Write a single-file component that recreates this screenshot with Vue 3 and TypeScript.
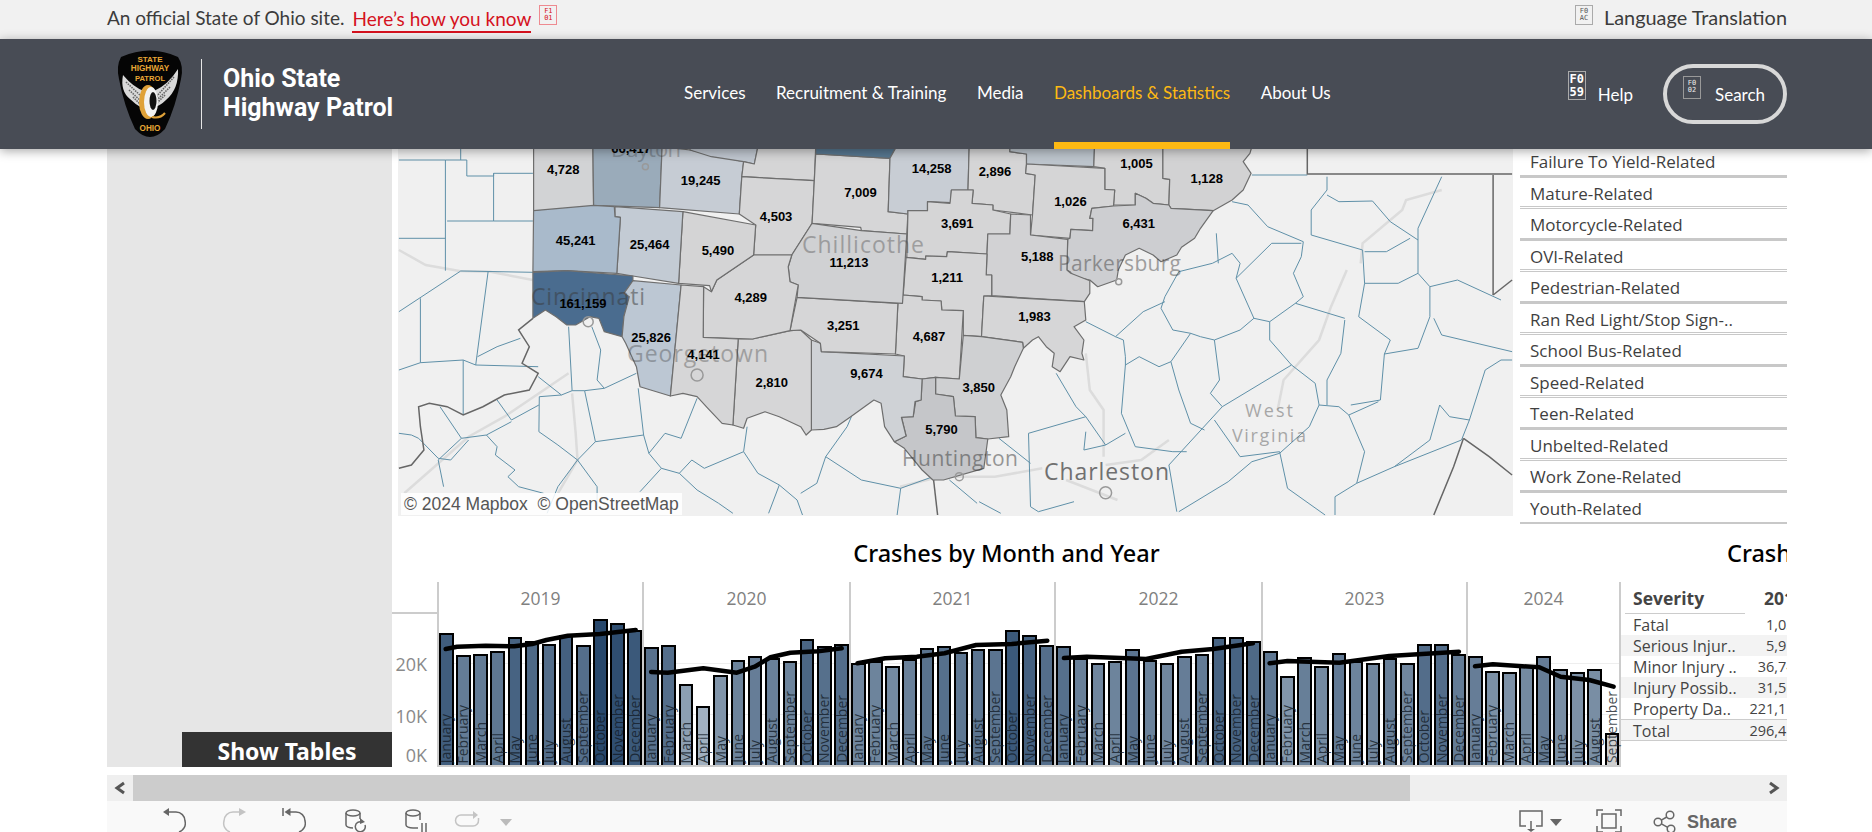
<template>
  <div class="page">
    <div class="notice">
      <span class="notice-text">An official State of Ohio site.</span>
      <a class="notice-link">Here’s how you know</a>
      <span class="tofu tofu-red"><i>F1</i><i>01</i></span>
      <span class="notice-lang">
        <span class="tofu tofu-grey"><i>F0</i><i>AC</i></span>
        Language Translation
      </span>
    </div>

    <header class="site-header">
      <div class="brand">
        <svg class="shield" viewBox="0 0 64 87" width="64" height="87">
          <path d="M3 6Q32-7 60 6Q66 15 63 28Q58 55 47 78Q32 94 17 78Q6 55 1 28Q-2 15 3 6Z" fill="#050505" />
          <path d="M5 24Q2 40 12 48Q18 54 24 57L26 40Q15 36 5 24Z" fill="#d9d9d9" />
          <path d="M60 18Q61 38 48 49Q42 55 36 56L36 40Q50 34 60 18Z" fill="#d9d9d9" />
          <path d="M8 31L24 46M11 39L24 51M15 46L23 54M56 26L38 46M52 36L38 50M47 44L38 53" stroke="#666" stroke-width="1.6" stroke-dasharray="1.5 1" fill="none" />
          <ellipse cx="30" cy="51" rx="9" ry="17" fill="#dfa138" />
          <ellipse cx="33" cy="51" rx="7" ry="15" fill="#f2f2f2" />
          <ellipse cx="35" cy="50" rx="3.5" ry="9" fill="#111" />
          <path d="M34 66Q42 68 47 62" stroke="#dfa138" stroke-width="2" fill="none" />
          <g class="shield-text" text-anchor="middle">
            <text x="32" y="11" font-size="8">STATE</text>
            <text x="32" y="20" font-size="8.2">HIGHWAY</text>
            <text x="32" y="30" font-size="7.6">PATROL</text>
            <text x="32" y="80" font-size="8.2">OHIO</text>
          </g>
        </svg>
        <span class="brand-rule"></span>
        <div class="brand-name">Ohio State<br />Highway Patrol</div>
      </div>

      <nav class="main-nav">
        <a v-for="item in navItems" :key="item" class="nav-item" :class="{ active: item === activeNav }">{{ item }}</a>
      </nav>

      <div class="header-tools">
        <span class="tofu tofu-help"><i>F0</i><i>59</i></span>
        <span class="tool-label">Help</span>
        <div class="search-pill">
          <span class="tofu tofu-search"><i>F0</i><i>02</i></span>
          <span class="tool-label">Search</span>
        </div>
      </div>
    </header>

    <main class="viz">
      <aside class="side-panel">
        <div class="show-tables">Show Tables</div>
      </aside>

      <div class="dash">
        <div class="upper">
          <div class="map-pane">
            <svg class="map" viewBox="398 149 1115 367" width="1115" height="367">
              <polyline v-for="(line, i) in roads" :key="'r' + i" class="road" :points="line" />
              <polyline v-for="(line, i) in countyLines" :key="'l' + i" class="county-line" :points="line" />
              <polyline v-for="(line, i) in darkLines" :key="'d' + i" class="state-line" :points="line" />
              <polygon v-for="(c, i) in counties" :key="'c' + i" class="county" :points="c.points" :fill="c.fill" />
              <circle v-for="(c, i) in cityDots" :key="'o' + i" class="city-dot" :cx="c.x" :cy="c.y" :r="c.r" />
              <text
                v-for="city in cities"
                :key="city.name"
                class="city"
                :x="city.x"
                :y="city.y"
                :font-size="city.size"
                :textLength="city.w"
                :opacity="city.alpha"
              >{{ city.name }}</text>
              <text v-for="l in countyLabels" :key="l.text" class="count" :x="l.x" :y="l.y">{{ l.text }}</text>
            </svg>
            <div class="attrib">© 2024 Mapbox&nbsp; © OpenStreetMap</div>
          </div>

          <ul class="filter-list">
            <li v-for="(name, i) in filters" :key="name" class="filter-row" :class="{ thick: i % 2 === 0 }">{{ name }}</li>
          </ul>
        </div>

        <div class="lower">
          <section class="chart-col">
            <h3 class="sheet-title">Crashes by Month and Year</h3>
            <div class="chart">
              <div class="axis">
                <div class="axis-head"></div>
                <div class="tick tick-20">20K</div>
                <div class="tick tick-10">10K</div>
                <div class="tick tick-0">0K</div>
              </div>
              <div class="years">
                <div v-for="y in years" :key="y.year" class="year" :style="{ width: y.width + 'px' }">
                  <div class="year-head">{{ y.year }}</div>
                  <div class="plot">
                    <div
                      v-for="(h, m) in y.heights"
                      :key="m"
                      class="bar"
                      :style="{ height: h + 'px', background: barColor(h, y.year, m) }"
                    >
                      <span class="month">{{ months[m] }}</span>
                    </div>
                  </div>
                </div>
                <svg class="trend" viewBox="437 582 1184 185" width="1184" height="185">
                  <polyline v-for="(t, i) in trends" :key="i" :points="t" />
                </svg>
              </div>
            </div>
          </section>

          <section class="table-col">
            <h3 class="sheet-title table-title">Crashes by Severity</h3>
            <div class="severity">
              <div class="sev-head">
                <span class="sev-name">Severity</span>
                <span class="sev-year">2019</span>
              </div>
              <div
                v-for="(row, i) in severity"
                :key="row.name"
                class="sev-row"
                :class="{ shade: i % 2 === 1, total: row.name === 'Total' }"
              >
                <span class="sev-label">{{ row.name }}</span>
                <span class="sev-value">{{ row.value }}</span>
              </div>
            </div>
          </section>
        </div>
      </div>
    </main>

    <div class="hscroll">
      <span class="scroll-btn">
        <svg viewBox="0 0 26 26" width="26" height="26"><path d="M17 8l-7 5 7 5" /></svg>
      </span>
      <span class="scroll-thumb"></span>
      <span class="scroll-rest"></span>
      <span class="scroll-btn">
        <svg viewBox="0 0 26 26" width="26" height="26"><path d="M9 8l7 5-7 5" /></svg>
      </span>
    </div>

    <div class="toolbar">
      <div class="tool-group">
        <svg class="ico" width="24" height="31" viewBox="0 0 24 31">
          <path d="M3 11H14a9 9 0 0 1 9 9a9 9 0 0 1-6 11" /><path class="solid" d="M1 11l6-4v8z" />
        </svg>
        <svg class="ico off ml-36" width="24" height="31" viewBox="0 0 24 31">
          <path d="M21 11H11a9 9 0 0 0-9 9a9 9 0 0 0 6 11" /><path class="solid" d="M24 11l-7-4v8z" />
        </svg>
        <svg class="ico ml-36" width="24" height="31" viewBox="0 0 24 31">
          <path d="M1 7v8M5 11H14a9 9 0 0 1 9 9a9 9 0 0 1-6 11" /><path class="solid" d="M2.5 11l6-4v8z" />
        </svg>
        <svg class="ico ml-39" width="24" height="31" viewBox="0 0 24 31">
          <ellipse cx="8" cy="12" rx="7" ry="3" />
          <path d="M1 12V24a7 3 0 0 0 7 3M15 12v6M20 24a5 5 0 1 1-3-3" /><path class="solid" d="M15 17l5 4-5 2z" />
        </svg>
        <svg class="ico ml-36" width="24" height="31" viewBox="0 0 24 31">
          <ellipse cx="8" cy="12" rx="7" ry="3" />
          <path d="M1 12V24a7 3 0 0 0 7 3h5M15 12v7M17 22v9M21 22v9" />
        </svg>
        <svg class="ico off ml-25" width="26" height="31" viewBox="0 0 26 31">
          <path d="M20 14H7a5.500 5.500 0 0 0 0 11H19a5.500 5.500 0 0 0 5.500-6V17" /><path class="solid" d="M24 14l-5-4v8z" />
        </svg>
        <svg class="caret off-fill ml-20" width="12" height="31" viewBox="0 0 12 31"><path d="M0 18H12L6 25z" /></svg>
      </div>

      <div class="tool-group">
        <svg class="ico" width="24" height="31" viewBox="0 0 24 31">
          <path d="M7 25H1V10H23V25H17M12 20V29" /><path class="solid" d="M8 28H16L12 31z" />
        </svg>
        <svg class="caret ml-7" width="12" height="31" viewBox="0 0 12 31"><path d="M0 18H12L6 25z" /></svg>
        <svg class="ico ml-34" width="26" height="31" viewBox="0 0 26 31">
          <rect x="6" y="13" width="14" height="14" />
          <path d="M1 15V9H7M19 9H25V15M1 25V31H7M19 31H25V25" />
        </svg>
        <svg class="ico ml-31" width="24" height="31" viewBox="0 0 24 31">
          <circle cx="17" cy="14" r="3.800" /><circle cx="5" cy="21" r="3.800" /><circle cx="18" cy="28" r="3.800" />
          <path d="M13.800 16L8.300 19.200M8.400 22.800L14.700 26.300" />
        </svg>
        <span class="share">Share</span>
      </div>
    </div>
  </div>
</template>

<script setup lang="ts">
interface Sheet { x0: number; sx: number; y0: number }
interface YearBars { year: number; width: number; heights: number[] }

// the map and trend lines were traced on zoomed crops, one sheet per crop
const sheets: Record<string, Sheet> = {
  a: { x0: 390, sx: 2.8, y0: 140 },
  b: { x0: 900, sx: 2.529, y0: 140 },
  c: { x0: 100, sx: 2.8, y0: 530 },
  d: { x0: 640, sx: 2.529, y0: 530 },
  e: { x0: 1250, sx: 2.8, y0: 530 }
}

const toPage = (p: string) => {
  const sheet = sheets[p[0]]
  const [x, y] = p.slice(1).split(',').map(Number)
  return { x: +(sheet.x0 + x / sheet.sx).toFixed(1), y: +(sheet.y0 + y / 3).toFixed(1) }
}

const toPoints = (s: string) =>
  s.trim().split(/\s+/).map(p => {
    const { x, y } = toPage(p)
    return `${x},${y}`
  }).join(' ')

const navItems = ['Services', 'Recruitment & Training', 'Media', 'Dashboards & Statistics', 'About Us']
const activeNav = 'Dashboards & Statistics'

const filters = [
  'Failure To Yield-Related', 'Mature-Related', 'Motorcycle-Related', 'OVI-Related',
  'Pedestrian-Related', 'Ran Red Light/Stop Sign-..', 'School Bus-Related', 'Speed-Related',
  'Teen-Related', 'Unbelted-Related', 'Work Zone-Related', 'Youth-Related'
]

const counties = [
  ['#d2d3d5', 'a402,20 a568,20 a570,212 a402,212'],
  ['#9aabba', 'a568,20 a762,20 a755,203 a570,196'],
  ['#c6ccd4', 'a762,20 a840,30 a990,65 a985,110 a978,222 a755,203'],
  ['#bfc6cf', 'a840,20 a1030,20 a1020,72 a990,65 a900,50 a840,30'],
  ['#d5d5d6', 'a990,65 a1020,72 a1030,20 a1192,20 a1188,122 a985,110'],
  ['#d6d6d7', 'a985,110 a1188,122 a1182,250 a1125,345 a1018,345 a1024,255 a978,222'],
  ['#d6d6d7', 'a1192,42 a1400,55 a1395,215 a1450,222 a1447,282 a1320,272 a1318,262 a1182,250'],
  ['#56768f', 'a1192,20 a1418,20 a1400,55 a1192,42'],
  ['#c8cdd4', 'a1418,20 b175,20 b172,150 b130,150 b128,188 a1505,185 a1505,212 a1450,212 a1450,222 a1395,215 a1400,55'],
  ['#d5d5d6', 'b175,20 b278,20 b278,35 b320,42 b320,72 b318,100 b342,105 b335,225 b235,210 b235,195 b182,190 b185,150 b172,150'],
  ['#bcc4cc', 'b278,20 b492,20 b490,80 b320,72 b320,42 b278,35'],
  ['#d5d5d6', 'b492,20 b665,20 b665,115 b682,118 b680,195 b640,190 b622,175 b595,160 b595,195 b540,195 b543,150 b518,148 b518,85 b490,80'],
  ['#d2d2d3', 'b665,20 b890,20 b885,40 b868,65 b888,100 b868,150 b840,180 b792,212 b685,205 b680,195 b682,118 b665,115'],
  ['#d5d5d6', 'b320,72 b518,85 b518,148 b543,150 b540,198 b485,205 b480,235 b488,235 b487,272 b432,268 b430,295 b330,285 b335,225 b342,105 b318,100'],
  ['#cdced1', 'b540,198 b595,195 b595,160 b622,175 b640,190 b680,195 b685,205 b792,212 b760,265 b745,295 b712,322 b700,345 b660,365 b640,345 b605,325 b570,345 b552,390 b548,420 b500,440 b480,420 b440,410 b430,395 b422,390 b424,298 b430,295 b432,268 b487,272 b488,235 b480,235 b485,205'],
  ['#d5d5d6', 'a1450,222 a1450,212 a1505,212 a1505,185 a1568,190 b130,150 b185,150 b182,190 b235,195 b235,210 b280,222 b278,282 b222,282 b220,342 b120,335 b118,350 b65,348 a1500,358 a1447,352'],
  ['#d2d2d4', 'b222,282 b278,282 b280,222 b330,225 b330,285 b424,298 b422,390 b432,400 b480,422 b480,460 b466,485 b232,467 b232,405 b218,405 b220,342'],
  ['#d6d6d7', 'a1445,352 a1500,358 b65,348 b118,350 b120,335 b220,342 b218,405 b232,405 b232,467 b212,468 b206,590 b160,586 b160,512 a1545,510 a1543,483 a1490,480 a1490,470 a1437,465'],
  ['#d6d6d7', 'b212,468 b466,485 b470,540 b440,560 b465,600 b460,640 b465,660 b430,650 b405,695 b385,680 b390,640 b370,620 b350,590 b335,600 b312,625 b310,607 b206,590'],
  ['#d6d6d7', 'a1437,465 a1490,470 a1490,480 a1543,483 a1545,510 b160,512 b150,717 b90,712 a1490,717 a1437,710 a1440,648 a1415,642 a1422,490'],
  ['#cfd0d2', 'b160,586 b206,590 b310,607 b312,625 b290,680 b280,710 b255,765 b270,810 b275,890 b222,897 b192,893 b190,830 b140,828 b135,770 b90,762 b90,712 b150,717'],
  ['#c5c6c9', 'a1490,717 b90,712 b90,762 b135,770 b140,828 b190,830 b192,893 b222,897 b212,985 b110,1020 a1520,1020 a1490,990 a1440,925 a1412,905 a1445,888 a1432,830 a1465,830 a1472,785 a1487,780'],
  ['#cfd2d6', 'a1180,600 a1205,610 a1208,635 a1440,648 a1437,710 a1490,717 a1487,780 a1470,785 a1465,830 a1432,832 a1445,888 a1412,905 a1385,860 a1375,790 a1355,780 a1290,830 a1250,860 a1215,868 a1180,870'],
  ['#d6d6d7', 'a975,597 a1015,597 a1120,572 a1150,570 a1180,600 a1180,870 a1165,885 a1150,860 a1090,830 a1050,815 a1000,835 a990,865 a960,855'],
  ['#d6d6d7', 'a1140,472 a1422,490 a1415,642 a1208,635 a1205,610 a1150,570 a1120,572'],
  ['#d0d1d3', 'a1182,250 a1320,272 a1447,282 a1435,490 a1140,472 a1143,435 a1120,425 a1115,380 a1125,345'],
  ['#d6d6d7', 'a1018,345 a1125,345 a1115,380 a1120,425 a1143,435 a1120,572 a1015,597 a877,592 a878,440 a900,455 a915,420'],
  ['#d4d4d5', 'a820,215 a1024,255 a1018,345 a915,420 a900,455 a895,437 a808,430'],
  ['#c3cbd4', 'a630,200 a820,215 a808,430 a680,408 a635,400 a645,232 a630,230'],
  ['#a9bacb', 'a402,212 a570,196 a628,200 a630,230 a645,232 a635,400 a495,392 a400,395'],
  ['#4a6c8f', 'a400,397 a495,392 a680,408 a680,425 a655,460 a670,470 a655,530 a650,590 a600,575 a585,535 a560,530 a520,555 a495,555 a465,530 a435,510 a400,535'],
  ['#bcc7d3', 'a680,422 a815,435 a785,768 a700,740 a690,680 a660,610 a650,590 a655,530 a670,470 a655,460'],
  ['#d6d6d7', 'a815,435 a878,440 a877,592 a975,597 a960,855 a930,850 a890,805 a860,770 a820,760 a785,768']
].map(([fill, pts]) => ({ fill, points: toPoints(pts) }))

const roads = [
  'a25,330 a100,375 a195,393 a280,395 a400,420',
  'a40,1060 a220,890 a320,830 a500,700',
  'a510,760 a520,880 a525,960 a470,1060',
  'b1130,390 b1090,500 b1060,600 b970,720 b955,810',
  'b1370,150 b1280,180 b1270,210 b1170,310 b1165,370',
  'b470,640 b480,750 b515,810 b515,950',
  'b680,900 b610,960 b520,975',
  'b0,1040 b100,1010 b240,1010 b360,985',
  'b420,1020 b550,1080'
].map(toPoints)

const countyLines = [
  'a25,60 a155,60 a155,392', 'a155,60 a215,60 a215,108 a290,108 a290,100 a400,100',
  'a290,100 a290,243 a160,243', 'a290,243 a400,243', 'a25,295 a155,295', 'a198,393 a400,397',
  'a198,393 a25,515', 'a198,20 a198,60', 'a275,393 a240,675 a205,660 a205,825',
  'a205,660 a85,668 a25,690', 'a85,475 a85,668', 'a240,675 a415,680',
  'a500,560 a510,752 a545,752 a600,745 a690,700', 'a415,710 a480,765 a418,770 a417,875 a470,915 a525,960',
  'a510,752 a480,765', 'a545,752 a575,905 a710,885 a695,745', 'a300,780 a340,840 a417,795',
  'a140,800 a200,895 a270,885 a340,845', 'a200,895 a135,960 a150,1040',
  'a25,880 a60,885 a80,895 a135,955 a170,960 a220,900', 'a270,885 a300,920 a295,945 a350,990 a330,1010 a360,1040 a430,1060',
  'a575,905 a525,960 a470,1040 a440,1120', 'a525,960 a580,1040 a580,1100',
  'a710,885 a725,940 a770,880 a815,895 a860,775', 'a725,940 a760,985 a810,1000 a845,960 a880,985 a990,935 a1000,860',
  'a760,985 a700,1055', 'a810,1000 a860,1050 a920,1090 a960,1120', 'a990,935 a1030,1000 a1090,1035 a1060,1120',
  'a1090,1035 a1140,1080 a1155,1125', 'a1300,810 a1280,860 a1220,950 a1195,1030 a1150,1060',
  'a1220,950 a1320,1020 a1430,1045 a1420,1125', 'a1430,1045 a1520,1010',
  'a565,560 a590,630 a580,720 a600,745', 'a245,650 a300,620 a365,595',
  'b890,105 b1030,105', 'b840,185 b880,195 b930,260 b1020,305 b1015,350 b995,400 b1020,470 b1000,490 b1125,535',
  'b1080,110 b1080,150 b1040,210 b1040,285 b1170,330 b1175,430 b1160,530',
  'b1080,165 b1110,185 b1195,183 b1240,245 b1310,300 b1310,400 b1340,440 b1340,530 b1310,625 b1225,642 b1215,780 b1140,795',
  'b1370,110 b1310,265 b1310,300', 'b1175,335 b1230,335 b1290,295', 'b1175,430 b1260,430 b1310,400',
  'b1340,440 b1410,420 b1520,480', 'b1350,535 b1370,585 b1548,635', 'b1160,530 b1240,600 b1225,642',
  'b800,280 b805,370', 'b850,415 b940,310 b1015,310',
  'b705,395 b790,370 b840,340 b860,370 b850,415 b895,535 b935,545 b1000,490',
  'b705,395 b670,470 b660,505 b690,570 b735,580', 'b895,535 b860,570 b795,600 b760,590 b735,580 b685,665 b655,680 b605,650 b570,675 b560,820 b595,920 b690,935 b725,935',
  'b670,485 b615,515 b545,590 b470,545', 'b545,590 b565,600 b570,650 b570,675',
  'b685,665 b705,750 b735,850 b770,870', 'b795,600 b808,720 b785,760 b815,800 b680,975 b700,1115',
  'b935,545 b935,600 b990,675 b815,800', 'b990,675 b1050,730 b1060,795 b1035,860 b960,940 b890,965 b830,1025 b705,1115',
  'b1060,795 b1110,800 b1135,825 b1175,935 b1155,1030 b1100,1070 b1100,1125', 'b1135,825 b1210,785',
  'b1125,540 b1115,640 b1080,720 b1080,795', 'b395,700 b445,800 b470,830 b520,915 b570,880',
  'b470,830 b325,880 b330,1100 b350,1115 b440,1085', 'b470,875 b465,930 b520,915', 'b250,895 b330,970',
  'b795,840 b860,950 b960,935 b980,1045 b1075,1125', 'b1155,1030 b1250,980 b1340,900 b1365,795 b1390,830 b1440,840 b1420,900 b1250,980',
  'b1480,690 b1440,840', 'b1480,690 b1520,660 b1548,660', 'b125,1020 b195,1090', 'b200,1085 b255,1120'
].map(toPoints)

const darkLines = [
  'a25,985 a60,975 a95,930 a85,860 a80,800 a110,790 a160,800 a205,825 a260,800 a320,765 a390,750 a415,700 a370,670 a390,620 a360,570 a400,535',
  'b1030,20 b1030,102 b1548,102', 'b1500,105 b1500,465', 'b1500,465 b1548,420',
  'b1425,895 b1490,950 b1548,1005', 'b1425,895 b1400,980 b1350,1125', 'b85,1020 b95,1125'
].map(toPoints)

const cityDots = [
  { ...toPage('a860,705'), r: 6 }, { ...toPage('b520,1058'), r: 6 }, { ...toPage('b150,1010'), r: 4 },
  { ...toPage('b553,425'), r: 3 }, { ...toPage('a715,80'), r: 3 }, { ...toPage('a555,545'), r: 5 }
]

const cities = [
  { name: 'Dayton', x: 611, y: 157, size: 22, w: 70, alpha: 0.3 },
  { name: 'Cincinnati', x: 531, y: 305, size: 23, w: 114, alpha: 0.5 },
  { name: 'Georgetown', x: 627, y: 362, size: 23, w: 141, alpha: 0.35 },
  { name: 'Chillicothe', x: 802, y: 253, size: 23, w: 122, alpha: 0.35 },
  { name: 'Parkersburg', x: 1058, y: 271, size: 21, w: 123, alpha: 0.45 },
  { name: 'Huntington', x: 902, y: 466, size: 21, w: 116, alpha: 0.5 },
  { name: 'Charleston', x: 1044, y: 480, size: 23, w: 125, alpha: 0.7 },
  { name: 'West', x: 1245, y: 417, size: 18, w: 48, alpha: 0.4 },
  { name: 'Virginia', x: 1232, y: 442, size: 18, w: 74, alpha: 0.4 }
]

const countyLabels = [
  ['66,417', 'a675,25'], ['4,728', 'a485,88'], ['19,245', 'a870,120'], ['7,009', 'a1317,158'],
  ['14,258', 'b80,85'], ['2,896', 'b240,93'], ['1,005', 'b598,70'], ['1,128', 'b776,115'],
  ['3,691', 'b145,249'], ['1,026', 'b431,183'], ['6,431', 'b604,249'], ['45,241', 'a520,301'],
  ['25,464', 'a727,312'], ['5,490', 'a918,330'], ['4,503', 'a1081,228'], ['11,213', 'a1285,366'],
  ['5,188', 'b347,348'], ['1,211', 'b119,411'], ['161,159', 'a540,489'], ['4,289', 'a1010,471'],
  ['25,826', 'a731,591'], ['3,251', 'a1269,555'], ['4,687', 'b73,588'], ['1,983', 'b340,528'],
  ['4,141', 'a878,643'], ['2,810', 'a1069,726'], ['9,674', 'a1334,699'], ['3,850', 'b199,741'],
  ['5,790', 'b105,867']
].map(([text, p]) => ({ text, ...toPage(p) }))

const months = ['January', 'February', 'March', 'April', 'May', 'June', 'July', 'August', 'September', 'October', 'November', 'December']

const years: YearBars[] = [
  { year: 2019, width: 205, heights: [132, 110, 111, 114, 128, 124, 121, 130, 120, 146, 142, 135] },
  { year: 2020, width: 207, heights: [118, 120, 81, 59, 90, 105, 109, 107, 104, 126, 119, 121] },
  { year: 2021, width: 205, heights: [102, 104, 99, 106, 117, 119, 113, 116, 116, 135, 130, 120] },
  { year: 2022, width: 207, heights: [119, 107, 102, 104, 116, 105, 102, 109, 111, 128, 128, 124] },
  { year: 2023, width: 205, heights: [114, 89, 108, 99, 112, 104, 102, 107, 102, 121, 121, 111] },
  { year: 2024, width: 155, heights: [109, 94, 93, 99, 109, 96, 93, 96, 32] }
]

const barColor = (h: number, year: number, month: number) => {
  if (year === 2024 && month === 8) return '#cfcfcf'
  const t = Math.pow((h - 59) / (146 - 59), 1.3)
  const mix = (from: number, to: number) => Math.round(from + (to - from) * t)
  return `rgb(${mix(160, 40)},${mix(176, 72)},${mix(192, 108)})`
}

const trends = [
  'c968,357 c1000,350 c1080,347 c1160,349 c1210,342 c1250,330 c1310,317 c1400,312 c1500,300',
  'd28,426 d70,428 d160,415 d245,428 d290,410 d330,382 d380,368 d450,364 d510,355',
  'd550,400 d620,385 d700,380 d770,370 d850,345 d940,342 d1030,332',
  'd1072,384 d1130,380 d1200,383 d1280,387 d1370,365 d1450,357 d1550,340',
  'e55,400 e105,393 e250,398 e390,378 e585,365',
  'e630,409 e680,403 e810,412 e870,440 e950,450 e1018,470'
].map(toPoints)

const severity = [
  { name: 'Fatal', value: '1,034' },
  { name: 'Serious Injur..', value: '5,912' },
  { name: 'Minor Injury ..', value: '36,745' },
  { name: 'Injury Possib..', value: '31,568' },
  { name: 'Property Da..', value: '221,156' },
  { name: 'Total', value: '296,415' }
]
</script>

<style scoped>
.page {
  width: 1872px;
  height: 832px;
  overflow: hidden;
  font-family: Lato, "Liberation Sans", sans-serif;
  color: #333;
}

.notice {
  height: 39px;
  box-sizing: border-box;
  padding: 0 85px 5px 107px;
  background: #f1f1f1;
  display: flex;
  align-items: center;
  font-size: 19px;
  color: #3c3c3c;
}
.notice-link {
  margin: 5px 0 0 8px;
  color: #d5121e;
  border-bottom: 2px solid #d5121e;
  padding-bottom: 1px;
}
.notice-lang {
  margin-left: auto;
  display: flex;
  align-items: center;
  gap: 11px;
  font-size: 19.900px;
}
.tofu {
  display: inline-flex;
  flex-direction: column;
  align-items: center;
  justify-content: center;
  width: 18px;
  height: 20px;
  border: 1px solid;
  box-sizing: border-box;
  font-family: "DejaVu Sans Mono", monospace;
  font-size: 7px;
  line-height: 7px;
}
.tofu i { font-style: normal; }
.tofu-red { color: #d5121e; border-color: #ee8a90; margin: -5px 0 0 8px; }
.tofu-grey { color: #555; border-color: #aaa; margin-top: -5px; }
.tofu-help {
  height: 29px;
  color: #fff;
  border-color: #aaa;
  font-size: 12px;
  line-height: 13px;
  font-weight: 700;
  margin-bottom: 17px;
  margin-right: -2px;
}
.tofu-search {
  height: 23px;
  color: #eee;
  border-color: #999;
  margin-bottom: 14px;
}

.site-header {
  position: relative;
  z-index: 5;
  height: 110px;
  background: #484c55;
  box-shadow: 0 2px 10px rgba(0, 0, 0, 0.35);
  display: flex;
  padding-left: 118px;
  color: #fff;
}
.brand {
  width: 566px;
  display: flex;
  align-items: center;
}
.shield { flex: none; overflow: visible; }
.shield-text {
  font-family: "Liberation Sans", sans-serif;
  font-weight: 700;
  fill: #e8a735;
}
.brand-rule {
  width: 1px;
  height: 70px;
  background: #e6e6e6;
  margin: 0 21px 0 19px;
}
.brand-name {
  font-family: Roboto, sans-serif;
  font-weight: 700;
  font-size: 25px;
  line-height: 29px;
  margin-top: -3px;
}
.main-nav {
  display: flex;
  gap: 30.500px;
}
.nav-item {
  display: flex;
  align-items: center;
  padding-top: 3px;
  border-bottom: 7px solid transparent;
  font-size: 17px;
}
.nav-item.active {
  color: #fdb913;
  border-bottom-color: #fdb913;
}
.header-tools {
  margin-left: auto;
  padding-right: 85px;
  display: flex;
  align-items: center;
}
.tool-label { font-size: 17px; }
.tofu-help + .tool-label { margin-left: 14px; }
.search-pill {
  margin-left: 30px;
  width: 124px;
  height: 60px;
  box-sizing: border-box;
  border: 4px solid #d8d8d8;
  border-radius: 30px;
  display: flex;
  align-items: center;
  padding-left: 16px;
  gap: 14px;
}

.viz {
  margin-left: 107px;
  width: 1680px;
  height: 618px;
  display: flex;
  overflow: hidden;
}
.side-panel {
  width: 285px;
  flex: none;
  background: #e6e6e6;
  display: flex;
  flex-direction: column;
  justify-content: flex-end;
  align-items: flex-end;
}
.show-tables {
  width: 210px;
  height: 35px;
  padding-top: 2px;
  box-sizing: border-box;
  background: #333;
  color: #fff;
  font-family: "Noto Sans", sans-serif;
  font-weight: 700;
  font-size: 23px;
  display: flex;
  align-items: center;
  justify-content: center;
}
.dash {
  flex: 1;
  min-width: 0;
}
.upper {
  display: flex;
  gap: 7px;
  height: 373px;
  padding-left: 6px;
}
.map-pane {
  position: relative;
  width: 1115px;
  height: 367px;
  flex: none;
  background: #f0f0f0;
}
.map {
  display: block;
  overflow: hidden;
}
.road { fill: none; stroke: #dcdcdc; stroke-width: 2.500; }
.county-line { fill: none; stroke: #5f90a8; stroke-width: 1; }
.state-line { fill: none; stroke: #666; stroke-width: 1.500; }
.county { stroke: #6e6e6e; stroke-width: 1.200; stroke-linejoin: round; }
.city-dot { fill: none; stroke: #999; stroke-width: 1.500; }
.city {
  font-family: "Open Sans", sans-serif;
  fill: #3a3a3a;
}
.count {
  font-family: "Liberation Sans", sans-serif;
  font-weight: 700;
  font-size: 13px;
  fill: #000;
  text-anchor: middle;
  dominant-baseline: central;
}
.attrib {
  position: absolute;
  left: 3px;
  bottom: 1px;
  height: 22px;
  line-height: 22px;
  padding: 0 3px;
  background: rgba(255, 255, 255, 0.85);
  font-family: "Liberation Sans", sans-serif;
  font-size: 17.500px;
  color: #555;
  white-space: nowrap;
}

.filter-list {
  list-style: none;
  margin: -3px 0 0;
  padding: 0;
  width: 267px;
  flex: none;
  font-family: "Open Sans", sans-serif;
  font-size: 17px;
  color: #3f3f3f;
}
.filter-row {
  height: 31.500px;
  box-sizing: border-box;
  padding-left: 10px;
  line-height: 31px;
  border-bottom: 3px double #c8c8c8;
  white-space: nowrap;
}
.filter-row.thick { border-bottom-style: solid; }
.filter-row:last-child { border-bottom: 2px solid #c8c8c8; }

.lower {
  display: flex;
}
.chart-col {
  width: 1229px;
  flex: none;
}
.sheet-title {
  margin: 0;
  height: 60px;
  padding-top: 15px;
  box-sizing: border-box;
  text-align: center;
  font-family: "Noto Sans", sans-serif;
  font-weight: 500;
  font-size: 23.500px;
  line-height: 32px;
  color: #000;
}
.chart {
  display: flex;
  height: 185px;
}
.axis {
  width: 45px;
  flex: none;
  color: #8a8a8a;
  font-size: 18px;
  font-family: "Open Sans", sans-serif;
}
.axis-head {
  height: 30px;
  border-bottom: 2px solid #ccc;
}
.tick {
  display: flex;
  align-items: flex-end;
  justify-content: flex-end;
  padding-right: 10px;
  line-height: 24px;
}
.tick-20 { height: 62px; }
.tick-10 { height: 52px; }
.tick-0 { height: 39px; }
.years {
  position: relative;
  display: flex;
}
.year {
  flex: none;
  box-sizing: border-box;
  border-left: 2px solid #ccc;
}
.year:last-of-type { border-right: 2px solid #ccc; }
.year-head {
  height: 30px;
  text-align: center;
  line-height: 32px;
  font-family: "Open Sans", sans-serif;
  font-size: 17.500px;
  color: #808080;
}
.plot {
  height: 153px;
  display: flex;
  justify-content: space-between;
  align-items: flex-end;
  border-bottom: 2px solid #ccc;
  background:
    linear-gradient(#eee, #eee) 0 51px / 100% 1px no-repeat,
    linear-gradient(#eee, #eee) 0 102px / 100% 1px no-repeat;
}
.bar {
  position: relative;
  width: 14.500px;
  box-sizing: border-box;
  border: 2px solid #000;
  border-bottom: 0;
}
.month {
  position: absolute;
  left: 50%;
  bottom: 2px;
  writing-mode: vertical-rl;
  transform: translateX(-50%) rotate(180deg);
  font-family: "Open Sans", sans-serif;
  font-size: 14px;
  line-height: 14px;
  white-space: nowrap;
  color: rgba(20, 28, 38, 0.8);
}
.trend {
  position: absolute;
  left: 0;
  top: 0;
  pointer-events: none;
}
.trend polyline {
  fill: none;
  stroke: #000;
  stroke-width: 4.500;
  stroke-linecap: round;
  stroke-linejoin: round;
}

.table-col {
  flex: 1;
  min-width: 0;
  overflow: hidden;
}
.table-title {
  text-align: left;
  padding-left: 106px;
  white-space: nowrap;
}
.severity {
  width: 190px;
  font-family: "Open Sans", sans-serif;
  color: #444;
}
.sev-head {
  height: 32px;
  display: flex;
  font-weight: 700;
  font-size: 17.500px;
  line-height: 32px;
}
.sev-name {
  width: 120px;
  margin-left: 4px;
  padding-left: 8px;
  box-sizing: border-box;
  border-bottom: 1px solid #ccc;
}
.sev-year { margin-left: 19px; }
.sev-row {
  height: 21px;
  display: flex;
  justify-content: space-between;
  padding: 0 8px 0 12px;
  font-size: 16px;
  line-height: 22px;
  white-space: nowrap;
}
.sev-row.shade { background: #f3f3f3; }
.sev-row.total {
  background: #f4f4f4;
  border-top: 1px solid #ccc;
  border-bottom: 1px solid #ccc;
  box-sizing: border-box;
  height: 22px;
}
.sev-value { font-size: 14.500px; }

.hscroll {
  margin: 8px 0 0 107px;
  width: 1680px;
  height: 26px;
  display: flex;
  background: #efefef;
}
.scroll-btn { width: 26px; height: 26px; flex: none; }
.scroll-btn svg { display: block; }
.scroll-btn path { fill: none; stroke: #555; stroke-width: 3; }
.scroll-thumb { width: 1277px; background: #ccc; }
.scroll-rest { flex: 1; }

.toolbar {
  margin-left: 107px;
  width: 1680px;
  height: 31px;
  overflow: hidden;
  background: #f9f9f9;
  display: flex;
  justify-content: space-between;
  padding: 0 50px 0 55px;
  box-sizing: border-box;
}
.tool-group { display: flex; align-items: flex-start; }
.ico { flex: none; fill: none; stroke: #666; stroke-width: 1.500; }
.ico .solid { fill: #666; stroke: none; }
.ico.off { stroke: #c4c4c4; }
.ico.off .solid { fill: #c4c4c4; }
.caret { flex: none; fill: #666; }
.caret.off-fill { fill: #bbb; }
.ml-7 { margin-left: 7px; }
.ml-20 { margin-left: 20px; }
.ml-25 { margin-left: 25px; }
.ml-31 { margin-left: 31px; }
.ml-34 { margin-left: 34px; }
.ml-36 { margin-left: 36px; }
.ml-39 { margin-left: 39px; }
.share {
  margin-left: 10px;
  font-family: "Liberation Sans", sans-serif;
  font-weight: 700;
  font-size: 18px;
  line-height: 42px;
  color: #666;
}
</style>
